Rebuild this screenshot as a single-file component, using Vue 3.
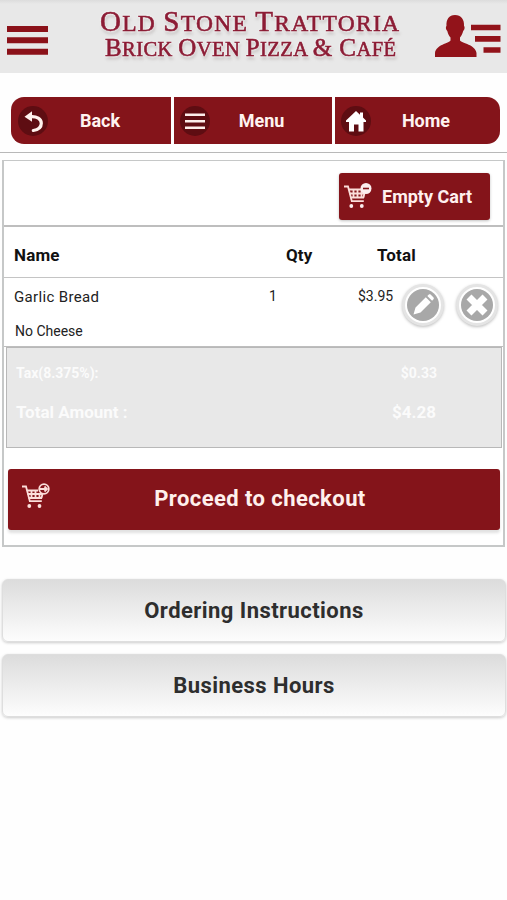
<template>
    <div class="page">
        <!-- ABOUT TOP BAR -->
        <header class="topBar">
            <button class="iconBtn" aria-label="Open menu">
                <svg width="41" height="30" viewBox="0 0 41 30">
                    <path d="M0 0h41v6H0zM0 11.3h41v6H0zM0 22.8h41v6H0z" fill="#8b1119" />
                </svg>
            </button>
            <svg class="logo" width="310" height="64" viewBox="0 0 310 64">
                <text x="2" y="27" textLength="299" class="logo_top">
                    O<tspan class="small">LD </tspan>S<tspan class="small">TONE </tspan>T<tspan class="small">RATTORIA</tspan>
                </text>
                <text x="7" y="52" textLength="291" class="logo_bottom">
                    B<tspan class="small">RICK </tspan>O<tspan class="small">VEN </tspan>P<tspan class="small">IZZA </tspan>&amp; C<tspan class="small">AFÉ</tspan>
                </text>
            </svg>
            <button class="iconBtn" aria-label="Account">
                <svg width="66" height="43" viewBox="0 0 66 43">
                    <path
                        d="M20 0c6 0 9.500 4.500 9 11 1 .5 .8 3.500-.8 5-.8 3-1.800 5-3.200 6.500v3c2 3 15.500 4 16.500 12.500v4H0V38c1-8.500 14-9.500 15.500-12.500v-3c-1.500-1.500-2.500-3.500-3.200-6.500-1.600-1.500-1.800-4.500-.8-5C11 4.500 14 0 20 0z"
                        fill="#92131a"
                    />
                    <path d="M36 9.800h29.500v5.400H36zM40 21h25.500v5.700H40zM48.500 32.300h17v5.500h-17z" fill="#92131a" />
                </svg>
            </button>
        </header>

        <!-- ABOUT NAVIGATION -->
        <nav class="nav">
            <a v-for="link in links" :key="link.label" class="nav_item">
                <span class="nav_icon">
                    <svg v-if="link.icon === 'back'" width="30" height="30" viewBox="0 0 30 30">
                        <path d="M6.500 10.700l7.500-5.500v10.600z" fill="#fff3ee" />
                        <path d="M12 10.700c7-.7 11.300 2.300 11.300 6.600 0 3.700-2.800 6.500-8 7.200" class="arrow" />
                    </svg>
                    <svg v-if="link.icon === 'menu'" width="30" height="30" viewBox="0 0 30 30">
                        <path d="M5 7.400h20v2.600H5zM5 13.900h20v2.600H5zM5 20.400h20V23H5z" fill="#fbeeea" />
                    </svg>
                    <svg v-if="link.icon === 'home'" width="30" height="30" viewBox="0 0 30 30">
                        <path d="M15 5l4 3.700V6.500h3v5l3 2.900v1.600h-2.500v9.500h-5v-7h-4.500v7h-5V16H5v-1.600z" fill="#fff" />
                    </svg>
                </span>
                <span class="nav_label">{{ link.label }}</span>
            </a>
        </nav>

        <!-- ABOUT CART -->
        <section class="cart">
            <div class="cart_actions">
                <button class="emptyBtn">
                    <svg width="28" height="26" viewBox="0 0 28 26">
                        <path d="M0 3.500h4l3.800 14.700h12" class="stroke" />
                        <path d="M5 6.500h14M5.500 10.500h14.500M6.500 14.500h13.500M9.500 6.500v8M13.500 6.500v8M17.500 6.500v8M20.500 10l-1 4.500" class="stroke" />
                        <circle cx="7.300" cy="23" r="1.900" fill="#fbeeee" />
                        <circle cx="17.800" cy="23" r="1.900" fill="#fbeeee" />
                        <circle cx="22" cy="5.500" r="5.500" fill="#fbeeee" />
                        <path d="M19 5.500h6" stroke="#84141a" stroke-width="1.600" />
                    </svg>
                    <span>Empty Cart</span>
                </button>
            </div>
            <div class="row head">
                <span class="col_name">Name</span>
                <span class="col_qty">Qty</span>
                <span class="col_total">Total</span>
            </div>
            <div v-for="item in items" :key="item.name" class="row item">
                <div class="item_name">
                    <p>{{ item.name }}</p>
                    <p class="item_option">{{ item.option }}</p>
                </div>
                <span class="item_qty">{{ item.qty }}</span>
                <span class="item_price">{{ item.price }}</span>
                <button class="roundBtn" aria-label="Edit item">
                    <svg width="32" height="32" viewBox="0 0 32 32">
                        <circle cx="16" cy="16" r="16" fill="#a8a8a8" />
                        <path d="M6.500 25.500l2-7L18.800 8.300l5 5L13.500 23.500zM20.300 6.900l1.300-1.200c.7-.6 1.500-.6 2.200 0l2.500 2.500c.7.7.7 1.500 0 2.200l-1.200 1.300z" fill="#fff" />
                    </svg>
                </button>
                <button class="roundBtn" aria-label="Remove item">
                    <svg width="32" height="32" viewBox="0 0 32 32">
                        <circle cx="16" cy="16" r="16" fill="#a8a8a8" />
                        <path d="M8 8l16 16M24 8L8 24" stroke="#fff" stroke-width="7" />
                    </svg>
                </button>
            </div>
            <div class="totals">
                <div class="totals_tax">
                    <span>Tax(8.375%):</span>
                    <span>$0.33</span>
                </div>
                <div class="totals_amount">
                    <span>Total Amount :</span>
                    <span>$4.28</span>
                </div>
            </div>
            <button class="checkoutBtn">
                <svg width="28" height="26" viewBox="0 0 28 26">
                    <path d="M0 3.500h4l3.800 14.700h12" class="stroke" />
                    <path d="M5 7.500h11M5.500 11h14.500M6.500 15h13.500M9.500 7.500v7M13.500 7.500v7M17.500 10v5M20.500 11l-1 4" class="stroke" />
                    <circle cx="7.300" cy="23" r="1.900" fill="#fbdeda" />
                    <circle cx="17.500" cy="23" r="1.900" fill="#fbdeda" />
                    <circle cx="22" cy="6" r="4.800" class="stroke" />
                    <path d="M17.500 6h7M22.500 3.500L25 6l-2.500 2.500" class="stroke" />
                </svg>
                <span>Proceed to checkout</span>
            </button>
        </section>

        <!-- ABOUT INFO BUTTONS -->
        <div class="info">
            <button v-for="label in infoButtons" :key="label" class="infoBtn">
                {{ label }}
            </button>
        </div>
    </div>
</template>

<script setup>
import { ref } from "vue";

const links = [
    { label: "Back", icon: "back" },
    { label: "Menu", icon: "menu" },
    { label: "Home", icon: "home" },
];

const items = ref([
    { name: "Garlic Bread", option: "No Cheese", qty: 1, price: "$3.95" },
]);

const infoButtons = ["Ordering Instructions", "Business Hours"];
</script>

<style>
body {
    background: #fefefe;
}
</style>

<style scoped>
.page {
    width: 507px;
    height: 900px;
    overflow: hidden;
    font-family: Roboto, sans-serif;
    color: #111;
}
.page * {
    box-sizing: border-box;
}
svg {
    display: block;
    flex: none;
}
p {
    margin: 0;
}
button {
    font-family: inherit;
    border: none;
    background: none;
    padding: 0;
    cursor: pointer;
}
.stroke {
    fill: none;
    stroke: #fbdeda;
    stroke-width: 1.8;
}
.arrow {
    fill: none;
    stroke: #fff3ee;
    stroke-width: 3.2;
    stroke-linecap: round;
}

/* ----------------------- TOP BAR ----------------------- */
.topBar {
    display: flex;
    align-items: flex-start;
    height: 73px;
    padding: 4px 0 0 7px;
    background: linear-gradient(#dcdcdc, #e8e8e8 4px, #e8e8e8);
}
.iconBtn:first-child {
    margin-top: 22px;
}
.iconBtn:last-child {
    margin: 11px 0 0 26.5px;
}
.logo {
    margin-left: 50px;
    fill: #8c1c35;
    font-family: "Liberation Serif", serif;
    stroke: #8c1c35;
    stroke-width: 0.6px;
    filter: drop-shadow(0 0 1px #fff) drop-shadow(1px 3px 1px rgba(120, 100, 100, 0.22));
}
.logo_top {
    font-size: 29px;
}
.logo_top .small {
    font-size: 23.5px;
}
.logo_bottom {
    font-size: 25px;
}
.logo_bottom .small {
    font-size: 20.5px;
}

/* ----------------------- NAVIGATION ----------------------- */
.nav {
    display: grid;
    grid-template-columns: 160px 158px 165px;
    gap: 3px;
    height: 80px;
    padding: 24px 7px 8px 11px;
    border-bottom: 1px solid #b8b8b8;
}
.nav_item {
    display: flex;
    align-items: center;
    height: 47px;
    padding-left: 6px;
    background: #84141a;
    color: #fff3f0;
    font-size: 18px;
    font-weight: 700;
}
.nav_item:first-child {
    padding-left: 7px;
    border-radius: 13px 0 0 13px;
}
.nav_item:last-child {
    border-radius: 0 13px 13px 0;
}
.nav_icon {
    border-radius: 50%;
    background: #5e0d12;
}
.nav_label {
    flex: 1;
    padding-right: 19px;
    text-align: center;
}

/* ----------------------- CART ----------------------- */
.cart {
    height: 387px;
    margin: 7px 2px 0;
    border: 2px solid #c6c8c8;
    border-top-width: 1px;
    background: #fff;
}
.cart_actions {
    display: flex;
    justify-content: flex-end;
    height: 66px;
    padding: 12px 13px 0 0;
    border-bottom: 2px solid #bebebe;
}
.emptyBtn {
    display: flex;
    align-items: flex-start;
    width: 151px;
    height: 47px;
    padding: 10px 0 0 5px;
    border-radius: 3px;
    background: #84141a;
    color: #fff0ee;
    font-size: 18px;
    font-weight: 700;
    line-height: 27px;
    box-shadow: 0 1px 3px rgba(0, 0, 0, 0.25);
}
.emptyBtn span {
    margin-left: 10px;
}
.row {
    display: flex;
    padding-left: 10px;
}
.head {
    height: 51px;
    align-items: center;
    padding-top: 6px;
    border-bottom: 1px solid #c4c4c4;
    font-size: 17px;
    font-weight: 700;
    letter-spacing: 0.15px;
}
.col_name {
    width: 272px;
}
.col_qty {
    width: 91px;
}
.item {
    align-items: flex-start;
    height: 69px;
    border-bottom: 1px solid #bebebe;
    color: #222;
    font-size: 14px;
}
.item_name {
    flex: none;
    width: 255px;
    padding-top: 9px;
    font-size: 15px;
    letter-spacing: 0.35px;
    line-height: 20px;
}
.item_option {
    margin: 15px 0 0 1px;
    font-size: 14px;
    letter-spacing: 0;
    line-height: 18px;
}
.item_qty {
    flex: none;
    width: 89px;
    padding-top: 10px;
}
.item_price {
    flex: none;
    width: 44px;
    padding-top: 10px;
}
.roundBtn {
    display: flex;
    align-items: center;
    justify-content: center;
    flex: none;
    width: 42px;
    height: 42px;
    margin: 6px 12px 0 0;
    border: 3px solid #e4e4e4;
    border-radius: 50%;
    background: #fff;
    box-shadow: 0 1px 3px rgba(0, 0, 0, 0.25);
}
.roundBtn:last-child {
    margin-right: 0;
}
.totals {
    height: 101px;
    margin: 0 1px 0 2px;
    padding: 14px 9px 0;
    border: 1px solid #b8b8b8;
    background: #e8e8e8;
    color: #fbfbfb;
    font-weight: 700;
}
.totals_tax,
.totals_amount {
    display: flex;
    justify-content: space-between;
    padding-right: 55px;
}
.totals_tax {
    font-size: 14px;
    line-height: 22px;
}
.totals_amount {
    margin-top: 15px;
    padding-right: 56px;
    font-size: 17px;
    line-height: 26px;
}
.checkoutBtn {
    display: flex;
    width: 492px;
    height: 61px;
    margin: 21px 0 0 4px;
    padding: 14px 0 0 14px;
    border-radius: 3px;
    background: #84141a;
    color: #fff0ec;
    font-size: 22px;
    font-weight: 700;
    letter-spacing: 0.42px;
    line-height: 32px;
    box-shadow: 0 3px 3px rgba(0, 0, 0, 0.12);
}
.checkoutBtn span {
    flex: 1;
    padding-right: 30px;
    text-align: center;
}

/* ----------------------- INFO BUTTONS ----------------------- */
.info {
    display: flex;
    flex-direction: column;
    gap: 12px;
    padding: 32px 1px 0 2px;
}
.infoBtn {
    height: 63px;
    border: 1px solid #dedede;
    border-radius: 6px;
    background: linear-gradient(#dcdcdc, #fdfdfd);
    color: #2e2e2e;
    font-size: 22px;
    font-weight: 700;
    letter-spacing: 0.44px;
    box-shadow: 0 1px 3px rgba(0, 0, 0, 0.2);
}
</style>
